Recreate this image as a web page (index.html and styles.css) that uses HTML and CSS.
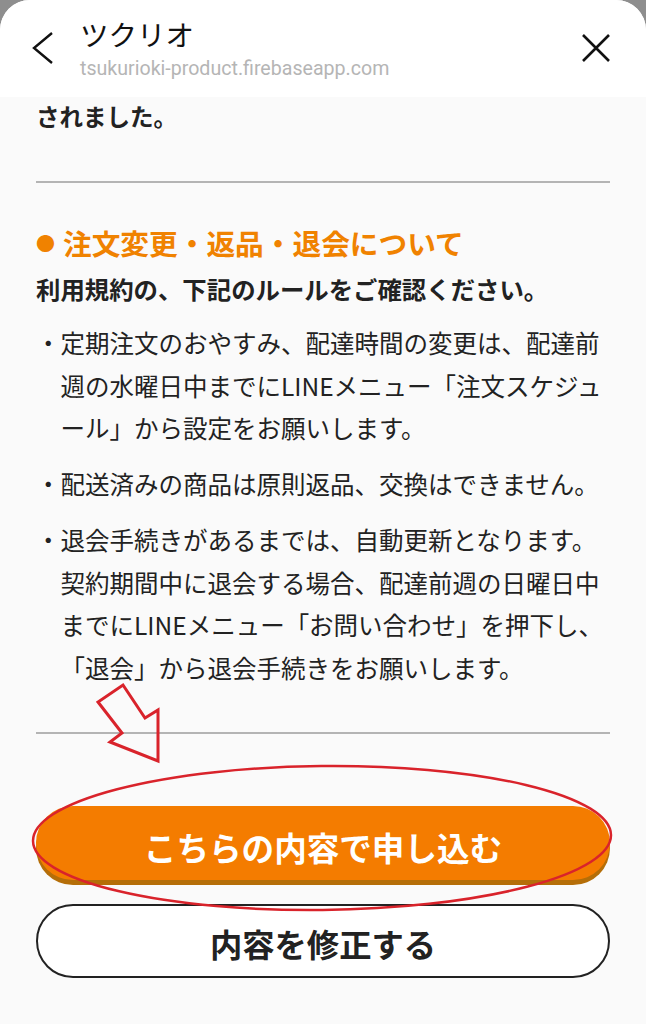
FILE: index.html
```html
<!DOCTYPE html>
<html lang="ja">
<head>
<meta charset="utf-8">
<title>ツクリオ</title>
<link rel="stylesheet" href="styles.css">
</head>
<body>
<div class="sheet">
  <header class="header">
    <svg class="back" width="22" height="32" viewBox="0 0 22 32"><path d="M20 1 L2 16 L20 31" fill="none" stroke="#111" stroke-width="2.4"/></svg>
    <div class="titles">
      <div class="title">ツクリオ</div>
      <div class="url">tsukurioki-product.firebaseapp.com</div>
    </div>
    <svg class="close" width="28" height="28" viewBox="0 0 28 28"><path d="M1 1 L27 27 M27 1 L1 27" fill="none" stroke="#111" stroke-width="2.6"/></svg>
  </header>
  <main class="content">
    <p class="lead">されました。</p>
    <hr class="rule rule-top">
    <h2 class="heading"><span class="dot">●</span>注文変更・返品・退会について</h2>
    <p class="sub">利用規約の、下記のルールをご確認ください。</p>
    <ul class="rules">
      <li>・定期注文のおやすみ、配達時間の変更は、配達前週の水曜日中までにLINEメニュー「注文スケジュール」から設定をお願いします。</li>
      <li>・配送済みの商品は原則返品、交換はできません。</li>
      <li>・退会手続きがあるまでは、自動更新となります。契約期間中に退会する場合、配達前週の日曜日中までにLINEメニュー「お問い合わせ」を押下し、「退会」から退会手続きをお願いします。</li>
    </ul>
    <hr class="rule rule-bottom">
    <button class="btn btn-primary">こちらの内容で申し込む</button>
    <button class="btn btn-secondary">内容を修正する</button>
  </main>
  <svg class="annot" width="646" height="1024" viewBox="0 0 646 1024">
    <polygon points="123,685 145,718 158,710 158,761 110,742 122,733 98,702" fill="none" stroke="#d9232b" stroke-width="3" stroke-linejoin="miter"/>
    <ellipse cx="322" cy="838" rx="289" ry="72" transform="rotate(-0.6 322 838)" fill="none" stroke="#d9232b" stroke-width="2.5"/>
  </svg>
</div>
</body>
</html>
```
FILE: styles.css
```css
* { box-sizing: border-box; }
html, body { margin: 0; padding: 0; }
body {
  background: #8e8e8e;
  font-family: "Noto Sans CJK JP", "Noto Sans", sans-serif;
  color: #222;
}
.sheet {
  position: relative;
  width: 646px;
  height: 1024px;
  background: #fafafa;
  border-radius: 30px 30px 0 0;
  overflow: hidden;
}
.header {
  height: 97px;
  background: #fff;
  display: flex;
  align-items: flex-start;
  padding: 0 36px 0 32px;
}
.back { margin-top: 32px; flex: none; }
.titles { margin-left: 26px; padding-top: 15px; }
.title {
  font-size: 28.5px;
  line-height: 38px;
  color: #111;
}
.url {
  margin-top: 4px;
  font-family: Roboto, "Liberation Sans", sans-serif;
  font-size: 19.6px;
  line-height: 24px;
  color: #b5b5b5;
}
.close { margin-left: auto; margin-top: 34px; flex: none; }

.content { padding: 0 36px; }
.lead {
  margin: 0;
  font-size: 23.5px;
  font-weight: 700;
  line-height: 38px;
}
.rule {
  border: 0;
  height: 2px;
  background: #b4b4b4;
  margin: 0;
}
.rule-top { margin-top: 46px; }
.heading {
  margin: 40px 0 0;
  height: 40px;
  font-size: 28.7px;
  line-height: 40px;
  font-weight: 700;
  color: #f08200;
  white-space: nowrap;
}
.dot {
  display: inline-block;
  width: 27px;
  font-size: 19px;
  line-height: 1;
  vertical-align: 4px;
}
.sub {
  margin: 9px 0 0;
  font-size: 24.4px;
  line-height: 34px;
  font-weight: 700;
}
.rules {
  list-style: none;
  margin: 16px 0 0;
  padding: 0;
  font-size: 24.5px;
  line-height: 42.5px;
}
.rules li {
  padding-left: 1em;
  text-indent: -1em;
  margin-bottom: 13.5px;
}
.rules li:last-child { margin-bottom: 0; }
.rule-bottom { margin-top: 43px; }
.btn {
  display: block;
  width: 100%;
  height: 74px;
  border-radius: 37px;
  font-family: inherit;
  font-weight: 700;
  padding: 0;
}
.btn-primary {
  margin-top: 72px;
  border: 0;
  background: #f47c00;
  color: #fff;
  font-size: 32.6px;
  box-shadow: 0 5px 0 #b56e08;
  padding-top: 6px;
}
.btn-secondary {
  margin-top: 24px;
  border: 2px solid #222;
  background: #fff;
  color: #222;
  font-size: 32.3px;
  padding-top: 4px;
}
.annot {
  position: absolute;
  left: 0;
  top: 0;
  pointer-events: none;
}
```
